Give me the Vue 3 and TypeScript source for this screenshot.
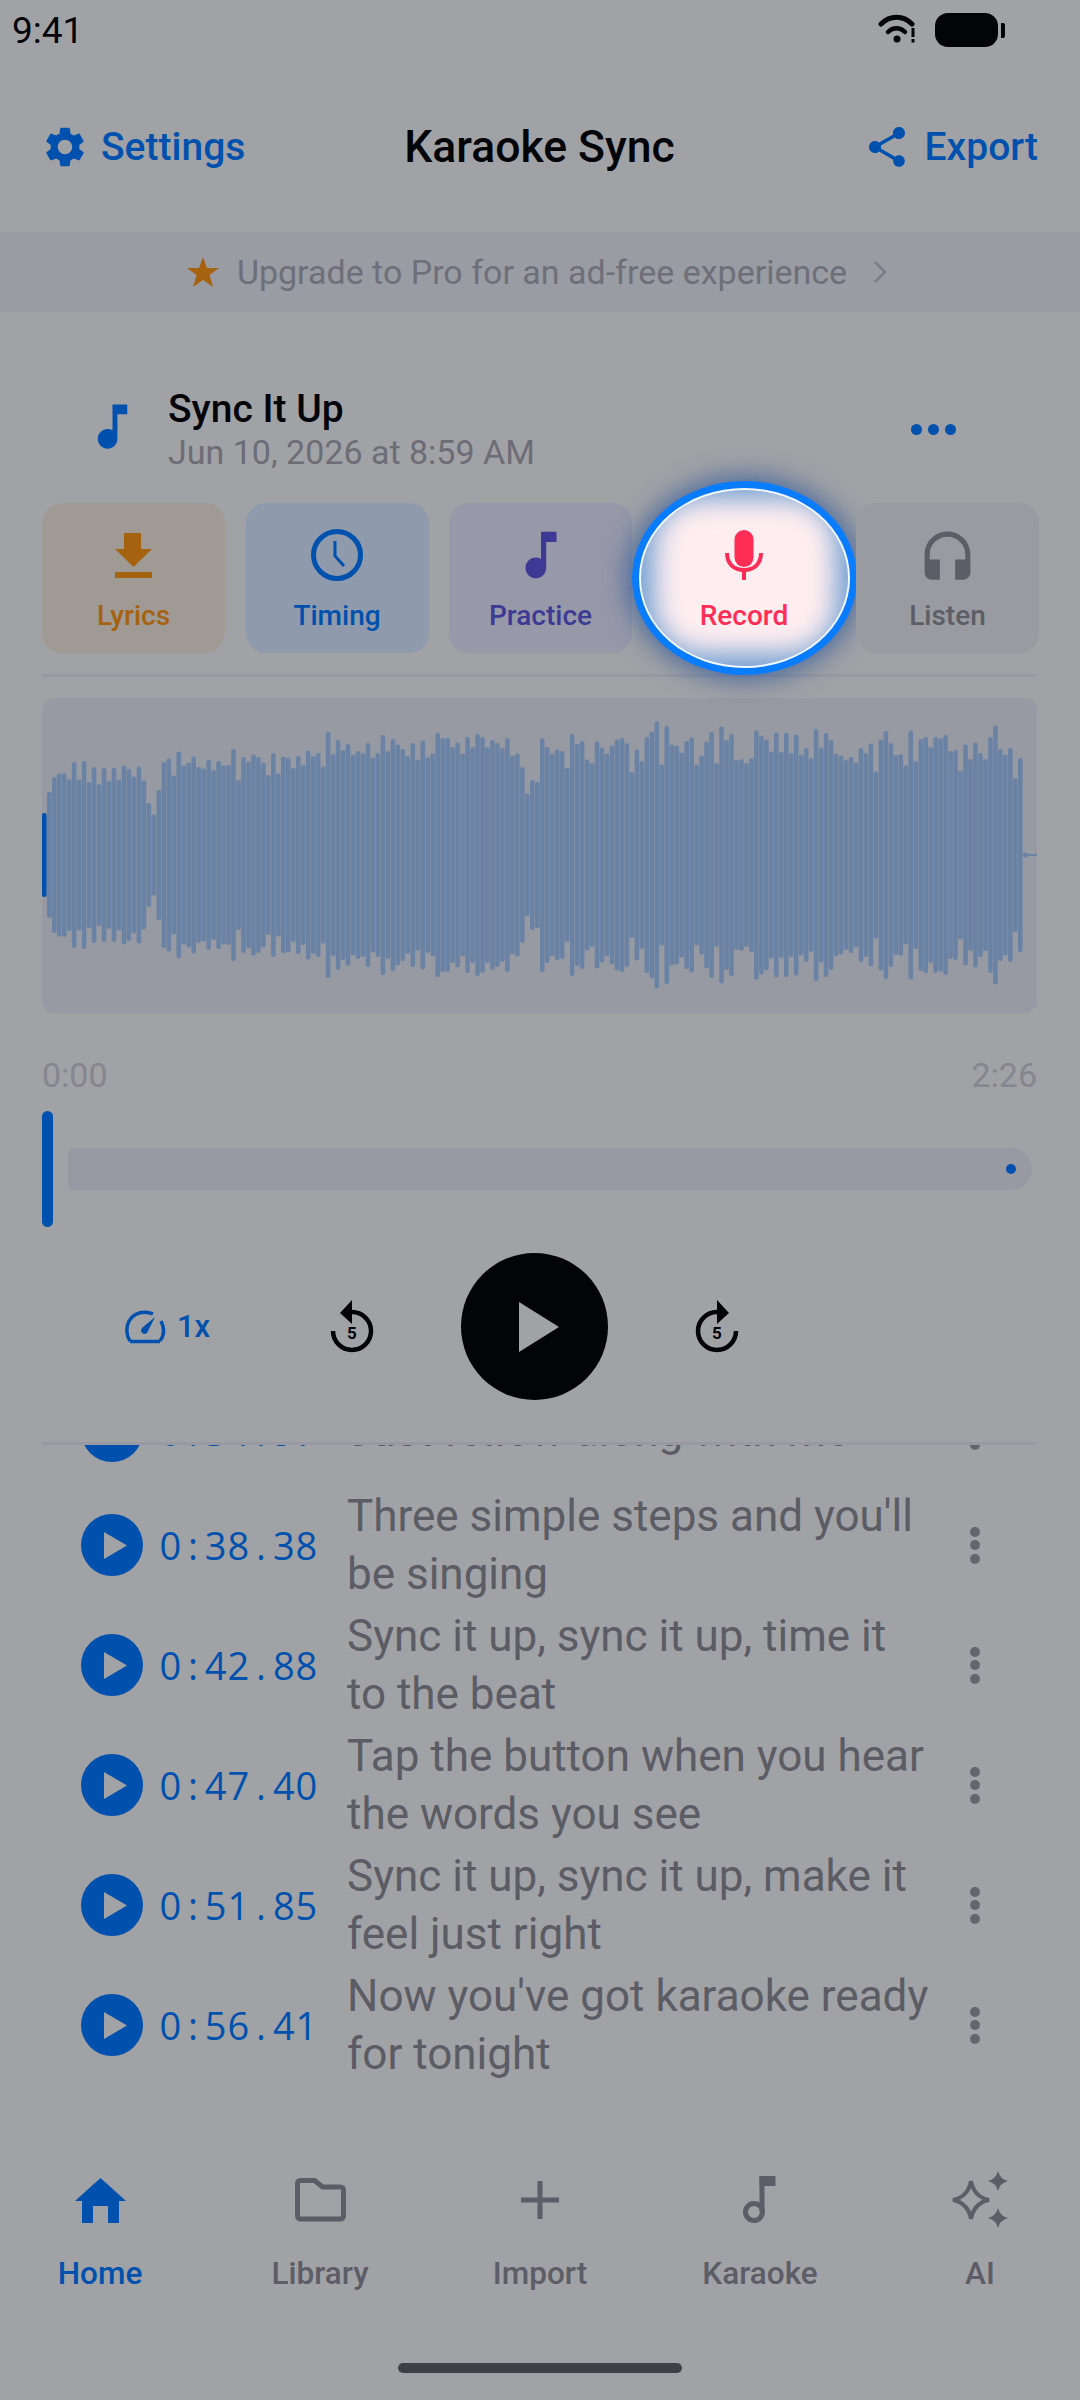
<template>
  <div class="page">
    <div class="status">
      <span class="clock">9:41</span>
      <div class="status-icons">
        <svg width="40" height="32" viewBox="0 0 40 32">
          <path d="M3 10C12 1 25 1 34 10" fill="none" stroke="#030408" stroke-width="5" stroke-linecap="round" />
          <path d="M10 18C15 13 22 13 27 18" fill="none" stroke="#030408" stroke-width="4.5" stroke-linecap="round" />
          <circle cx="19" cy="25" r="3.5" fill="#030408" />
          <rect x="33.5" y="14" width="3" height="9" fill="#030408" />
          <rect x="33.5" y="25" width="3" height="3.5" fill="#030408" />
        </svg>
        <div class="battery"></div>
        <div class="battery-cap"></div>
      </div>
    </div>

    <header class="header">
      <div class="head-btn settings">
        <svg width="48" height="48" viewBox="0 0 24 24" fill="#0051AD">
          <path d="M19.14 12.94c.04-.3.06-.61.06-.94 0-.32-.02-.64-.07-.94l2.03-1.58c.18-.14.23-.41.12-.61l-1.92-3.32c-.12-.22-.37-.29-.59-.22l-2.39.96c-.5-.38-1.03-.7-1.62-.94l-.36-2.54c-.04-.24-.24-.41-.48-.41h-3.84c-.24 0-.43.17-.47.41l-.36 2.54c-.59.24-1.13.57-1.62.94l-2.39-.96c-.22-.08-.47 0-.59.22L2.74 8.87c-.12.21-.08.47.12.61l2.03 1.58c-.05.3-.09.63-.09.94s.02.64.07.94l-2.03 1.58c-.18.14-.23.41-.12.61l1.92 3.32c.12.22.37.29.59.22l2.39-.96c.5.38 1.03.7 1.62.94l.36 2.54c.05.24.24.41.48.41h3.84c.24 0 .44-.17.47-.41l.36-2.54c.59-.24 1.13-.56 1.62-.94l2.39.96c.22.08.47 0 .59-.22l1.92-3.32c.12-.22.07-.47-.12-.61l-2.01-1.58zM12 15.6c-1.98 0-3.6-1.62-3.6-3.6s1.62-3.6 3.6-3.6 3.6 1.62 3.6 3.6-1.62 3.6-3.6 3.6z" />
        </svg>
        <span>Settings</span>
      </div>
      <h1 class="title">Karaoke Sync</h1>
      <div class="head-btn export">
        <svg width="48" height="48" viewBox="0 0 24 24" fill="#0051AD">
          <path d="M18 16.08c-.76 0-1.44.3-1.96.77L8.91 12.7c.05-.23.09-.46.09-.7s-.04-.47-.09-.7l7.05-4.11c.54.5 1.25.81 2.04.81 1.66 0 3-1.34 3-3s-1.34-3-3-3-3 1.34-3 3c0 .24.04.47.09.7L8.04 9.81C7.5 9.31 6.79 9 6 9c-1.66 0-3 1.34-3 3s1.34 3 3 3c.79 0 1.5-.31 2.04-.81l7.12 4.16c-.05.21-.08.43-.08.65 0 1.61 1.31 2.92 2.92 2.92 1.61 0 2.92-1.31 2.92-2.92s-1.31-2.92-2.92-2.92z" />
        </svg>
        <span>Export</span>
      </div>
    </header>

    <div class="banner">
      <svg width="32" height="30" viewBox="0 0 32 30">
        <polygon points="16,0 20,11 32,11 22.500,18 26,30 16,23 6,30 9.500,18 0,11 12,11" fill="#A5620F" />
      </svg>
      <span class="banner-text">Upgrade to Pro for an ad-free experience</span>
      <svg width="14" height="24" viewBox="0 0 14 24">
        <path d="M2 2l10 10L2 22" fill="none" stroke="#7A7B84" stroke-width="2.500" />
      </svg>
    </div>

    <section class="track">
      <svg class="track-note" width="59" height="59" viewBox="0 0 24 24" fill="#0051AD">
        <path d="M12 3v10.55c-.59-.34-1.27-.55-2-.55-2.21 0-4 1.79-4 4s1.790 4 4 4 4-1.790 4-4V7h4V3h-6z" />
      </svg>
      <div class="track-info">
        <div class="track-name">Sync It Up</div>
        <div class="track-date">Jun 10, 2026 at 8:59 AM</div>
      </div>
      <div class="more">
        <i></i><i></i><i></i>
      </div>
    </section>

    <nav class="tabs">
      <div class="tab lyrics">
        <div class="tab-icon">
          <svg width="37" height="45" viewBox="0 0 37 45" fill="#A5620F">
            <path d="M9 0h17v16h11L18.500 34 0 16h9zM0 39h37v6H0z" />
          </svg>
        </div>
        <span>Lyrics</span>
      </div>
      <div class="tab timing">
        <div class="tab-icon">
          <svg width="54" height="54" viewBox="0 0 54 54" fill="none" stroke="#0051AD">
            <circle cx="27" cy="27" r="23.500" stroke-width="5" />
            <path d="M25 13v15l9 10" stroke-width="3" />
          </svg>
        </div>
        <span>Timing</span>
      </div>
      <div class="tab practice">
        <div class="tab-icon">
          <svg width="62" height="62" viewBox="0 0 24 24" fill="#3C3A94">
            <path d="M12 3v10.55c-.59-.34-1.27-.55-2-.55-2.21 0-4 1.790-4 4s1.790 4 4 4 4-1.790 4-4V7h4V3h-6z" />
          </svg>
        </div>
        <span>Practice</span>
      </div>
      <div class="tab record">
        <div class="spot">
          <div class="spot-core"></div>
        </div>
        <div class="tab-icon">
          <svg width="38" height="50" viewBox="0 0 38 50">
            <rect x="9.500" y="0" width="19" height="37" rx="9.500" fill="#FF2D55" />
            <path d="M2 23c0 11 7 17 17 17s17-6 17-17" fill="none" stroke="#FF2D55" stroke-width="4" />
            <rect x="17" y="38" width="4" height="12" fill="#FF2D55" />
          </svg>
        </div>
        <span>Record</span>
      </div>
      <div class="tab listen">
        <div class="tab-icon">
          <svg class="headset" width="61" height="61" viewBox="0 0 24 24" fill="#5C5D66">
            <path d="M12 1c-4.970 0-9 4.030-9 9v7c0 1.660 1.340 3 3 3h3v-8H5v-2c0-3.870 3.130-7 7-7s7 3.130 7 7v2h-4v8h3c1.660 0 3-1.340 3-3v-7c0-4.970-4.030-9-9-9z" />
          </svg>
        </div>
        <span>Listen</span>
      </div>
    </nav>

    <div class="divider top-div"></div>

    <div class="wave">
      <svg width="995" height="315" viewBox="0 0 995 315">
        <rect
          v-for="bar in bars"
          :key="bar.x"
          :x="bar.x"
          :y="157 - bar.h / 2"
          width="4.600"
          :height="bar.h"
          rx="2"
          :fill="bar.x === 0 ? '#0051AD' : '#6A83A5'"
        />
        <circle cx="983.500" cy="157" r="2.500" fill="#6A83A5" />
        <rect x="983" y="156" width="13" height="2" fill="#6A83A5" />
      </svg>
    </div>

    <div class="times">
      <span>0:00</span>
      <span>2:26</span>
    </div>

    <div class="scrub">
      <div class="scrub-handle"></div>
      <div class="scrub-track">
        <div class="scrub-dot"></div>
      </div>
    </div>

    <div class="controls">
      <div class="speed">
        <svg width="42" height="34" viewBox="0 0 42 34" fill="none" stroke="#0051AD">
          <path d="M6 31C2 25 1.800 17 5 11C9 4 16 2.200 21 2.200C24 2.200 27 3 29 4" stroke-width="3.500" />
          <path d="M37 11C40.500 18 40.500 25 36 31" stroke-width="3.500" />
          <path d="M6 31.500H36" stroke-width="3.500" />
          <path d="M31 7L24 21a3.500 3.500 0 1 1-6-3z" fill="#0051AD" stroke="none" />
        </svg>
        <span>1x</span>
      </div>
      <svg class="skip" width="48" height="56" viewBox="0 0 48 56">
        <path d="M23 13A19 19 0 1 1 4 32" fill="none" stroke="#030408" stroke-width="4.500" />
        <polygon points="11,14 23,1 23,25" fill="#030408" />
        <text x="23" y="40" text-anchor="middle" class="skip-num">5</text>
      </svg>
      <div class="play">
        <svg width="40" height="50" viewBox="0 0 40 50">
          <polygon points="0,0 40,25 0,50" fill="#A1A2A6" />
        </svg>
      </div>
      <svg class="skip" width="48" height="56" viewBox="0 0 48 56">
        <path d="M25 13A19 19 0 1 0 44 32" fill="none" stroke="#030408" stroke-width="4.500" />
        <polygon points="37,14 25,1 25,25" fill="#030408" />
        <text x="25" y="40" text-anchor="middle" class="skip-num">5</text>
      </svg>
    </div>

    <div class="divider list-div"></div>

    <div class="list">
      <div class="list-inner">
        <div v-for="row in rows" :key="row.time" class="row">
          <div class="row-play">
            <svg width="23" height="27" viewBox="0 0 23 27">
              <polygon points="0,0 23,13.500 0,27" fill="#A1A2A6" />
            </svg>
          </div>
          <div class="row-time">
            <span v-for="(ch, i) in row.time" :key="i">{{ ch }}</span>
          </div>
          <div class="row-text">{{ row.text }}</div>
          <div class="kebab">
            <i></i><i></i><i></i>
          </div>
        </div>
      </div>
    </div>

    <footer class="nav">
      <div class="nav-item active">
        <div class="nav-icon">
          <svg width="51" height="45" viewBox="0 0 51 45" fill="#0051AD">
            <path d="M25.500 0L51 23h-7v22H33V28H18v17H7V23H0z" />
          </svg>
        </div>
        <span>Home</span>
      </div>
      <div class="nav-item">
        <div class="nav-icon">
          <svg width="51" height="44" viewBox="0 0 51 44" fill="none" stroke="#5C5D66" stroke-width="5">
            <path d="M2.500 5.500a3 3 0 0 1 3-3h14l8 6.500h18a3 3 0 0 1 3 3v26a3 3 0 0 1-3 3h-40a3 3 0 0 1-3-3z" />
          </svg>
        </div>
        <span>Library</span>
      </div>
      <div class="nav-item">
        <div class="nav-icon">
          <svg width="38" height="38" viewBox="0 0 38 38" fill="#5C5D66">
            <path d="M16.500 0h5v16.500H38v5H21.500V38h-5V21.500H0v-5h16.500z" />
          </svg>
        </div>
        <span>Import</span>
      </div>
      <div class="nav-item">
        <div class="nav-icon">
          <svg width="34" height="48" viewBox="0 0 34 48">
            <circle cx="11" cy="36" r="8.500" fill="none" stroke="#5C5D66" stroke-width="5" />
            <rect x="16.500" y="0" width="5" height="36" fill="#5C5D66" />
            <rect x="16.500" y="0" width="16" height="10" fill="#5C5D66" />
          </svg>
        </div>
        <span>Karaoke</span>
      </div>
      <div class="nav-item">
        <div class="nav-icon">
          <svg width="60" height="58" viewBox="0 0 60 58">
            <path d="M21 10Q24 26 39 29Q24 32 21 48Q18 32 3 29Q18 26 21 10z" fill="none" stroke="#5C5D66" stroke-width="4" />
            <path d="M48 0Q50 8 58 10Q50 12 48 20Q46 12 38 10Q46 8 48 0z" fill="#5C5D66" />
            <path d="M48 37Q50 45 58 47Q50 49 48 57Q46 49 38 47Q46 45 48 37z" fill="#5C5D66" />
          </svg>
        </div>
        <span>AI</span>
      </div>
    </footer>

    <div class="home-bar-wrap">
      <div class="home-bar"></div>
    </div>
  </div>
</template>

<script setup lang="ts">
import { computed } from 'vue'

interface Row {
  time: string
  text: string
}

const rows: Row[] = [
  { time: '0:34.97', text: 'Just follow along with me' },
  { time: '0:38.38', text: "Three simple steps and you'll be singing" },
  { time: '0:42.88', text: 'Sync it up, sync it up, time it to the beat' },
  { time: '0:47.40', text: 'Tap the button when you hear the words you see' },
  { time: '0:51.85', text: 'Sync it up, sync it up, make it feel just right' },
  { time: '0:56.41', text: "Now you've got karaoke ready for tonight" }
]

// bar heights read off the waveform, left to right
const heights = [
  84, 126, 156, 163, 164, 152, 186, 151, 188, 146, 176, 142, 174, 148, 174, 151, 179, 172, 157, 177,
  149, 104, 81, 130, 186, 193, 159, 207, 179, 185, 197, 176, 173, 190, 170, 188, 179, 180, 212, 150,
  196, 187, 201, 196, 185, 160, 204, 163, 197, 195, 174, 198, 180, 209, 198, 204, 177, 246, 202, 230,
  210, 222, 201, 208, 204, 224, 195, 204, 240, 208, 232, 221, 212, 198, 224, 191, 229, 196, 203, 244,
  234, 234, 216, 225, 203, 236, 216, 242, 236, 216, 230, 224, 214, 234, 199, 203, 176, 123, 150, 146,
  234, 216, 203, 211, 208, 174, 242, 222, 228, 191, 184, 227, 215, 203, 219, 231, 234, 224, 166, 211,
  188, 236, 247, 267, 181, 258, 221, 219, 205, 228, 235, 181, 199, 227, 246, 184, 257, 230, 242, 190,
  192, 184, 194, 249, 239, 231, 207, 245, 206, 244, 204, 241, 201, 214, 194, 252, 215, 244, 230, 203,
  199, 190, 196, 185, 214, 204, 223, 167, 231, 248, 224, 200, 202, 179, 249, 188, 232, 236, 216, 236,
  233, 240, 208, 210, 169, 221, 192, 225, 204, 192, 236, 259, 212, 201, 214, 154, 194
]

const bars = computed(() => {
  const step = 976 / (heights.length - 1)
  return heights.map((h, i) => ({ x: i * step, h }))
})
</script>

<style>
html,
body {
  margin: 0;
  background: #a1a2a6;
}
</style>

<style scoped>
.page {
  width: 1080px;
  height: 2400px;
  overflow: hidden;
  background: #a1a2a6;
  font-family: Roboto, sans-serif;
  display: flex;
  flex-direction: column;
}

.status {
  height: 60px;
  box-sizing: border-box;
  padding: 0 75px 0 12px;
  display: flex;
  justify-content: space-between;
  align-items: center;
}

.clock {
  font-size: 37px;
  color: #030408;
}

.status-icons {
  display: flex;
  align-items: center;
}

.battery {
  width: 63px;
  height: 34px;
  border-radius: 13px;
  background: #030408;
  margin-left: 17px;
}

.battery-cap {
  width: 4px;
  height: 15px;
  margin-left: 3px;
  background: #030408;
  border-radius: 0 2px 2px 0;
}

.header {
  height: 172px;
  box-sizing: border-box;
  padding: 2px 42px 0 41px;
  display: grid;
  grid-template-columns: 1fr auto 1fr;
  align-items: center;
}

.head-btn {
  display: flex;
  align-items: center;
  color: #0051ad;
  font-size: 39px;
  font-weight: 500;
}

.settings {
  gap: 12px;
}

.export {
  gap: 14px;
  justify-content: flex-end;
}

.title {
  margin: 0;
  font-size: 44.500px;
  font-weight: 500;
  color: #030408;
}

.banner {
  height: 80px;
  box-sizing: border-box;
  padding-right: 6px;
  background: #9a9ca4;
  display: flex;
  align-items: center;
  justify-content: center;
  gap: 18px;
}

.banner-text {
  font-size: 34px;
  color: #6e6f78;
  margin-right: 8px;
}

.track {
  height: 191px;
  box-sizing: border-box;
  padding: 75px 0 0 83px;
  display: flex;
  align-items: flex-start;
}

.track-note {
  margin-top: 10px;
}

.track-info {
  margin-left: 26px;
  flex: 1;
}

.track-name {
  font-size: 39px;
  font-weight: 500;
  color: #030408;
  line-height: 44px;
}

.track-date {
  font-size: 34px;
  color: #6c6d75;
  line-height: 42px;
}

.more {
  display: flex;
  gap: 6px;
  margin: 37px 124px 0 0;
}

.more i {
  width: 11px;
  height: 11px;
  border-radius: 50%;
  background: #0051ad;
}

.tabs {
  height: 150px;
  padding-left: 42px;
  display: flex;
  gap: 20.500px;
}

.tab {
  width: 183px;
  height: 150px;
  box-sizing: border-box;
  border-radius: 20px;
  position: relative;
  display: flex;
  flex-direction: column;
  align-items: center;
  font-size: 28px;
  font-weight: 500;
}

.tab span {
  position: relative;
  margin-top: 3px;
}

.tab-icon {
  position: relative;
  height: 54px;
  margin-top: 25px;
  margin-bottom: 14px;
  display: flex;
  align-items: center;
  justify-content: center;
}

.headset {
  margin-top: 8px;
}

.lyrics {
  background: #a09a95;
  color: #a5620f;
}

.timing {
  background: #8f9bad;
  color: #0051ad;
}

.practice {
  background: #9799a8;
  color: #3c3a94;
}

.record {
  color: #ff2d55;
}

.listen {
  background: #9a9ba0;
  color: #5c5d66;
}

.spot {
  position: absolute;
  left: -14px;
  top: -15px;
  width: 211px;
  height: 180px;
  box-sizing: border-box;
  border-radius: 50%;
  overflow: hidden;
  border: 2px solid #f4f8ff;
  background: #6a9bd0;
  box-shadow: 0 0 0 7px #0a7cff, 0 0 26px 12px rgba(0, 60, 150, 0.55);
}

.spot-core {
  position: absolute;
  left: 12px;
  top: 8px;
  width: 184px;
  height: 156px;
  border-radius: 50px;
  background: #ffeef0;
  filter: blur(14px);
}

.divider {
  height: 3px;
  margin: 0 43px 0 42px;
  background: #9999a4;
}

.top-div {
  margin-top: 21px;
}

.wave {
  width: 995px;
  height: 315px;
  margin: 21px 0 0 42px;
  border-radius: 12px;
  background: #989aa3;
  overflow: hidden;
}

.wave svg {
  display: block;
}

.times {
  margin: 40px 43px 0 42px;
  height: 44px;
  display: flex;
  justify-content: space-between;
  align-items: center;
  font-size: 34px;
  color: #85868e;
}

.scrub {
  height: 116px;
  margin: 14px 43px 0 42px;
  display: flex;
  align-items: center;
}

.scrub-handle {
  width: 11px;
  height: 116px;
  border-radius: 6px;
  background: #0051ad;
}

.scrub-track {
  flex: 1;
  height: 42px;
  margin: 0 5px 0 15px;
  border-radius: 4px 21px 21px 4px;
  background: #989aa3;
  display: flex;
  align-items: center;
  justify-content: flex-end;
}

.scrub-dot {
  width: 10px;
  height: 10px;
  border-radius: 50%;
  margin-right: 16px;
  background: #0051ad;
}

.controls {
  height: 147px;
  margin-top: 26px;
  padding-left: 124px;
  display: grid;
  grid-template-columns: 205px 132px 231px auto;
  align-items: center;
}

.speed {
  display: flex;
  align-items: center;
  gap: 11px;
  color: #0051ad;
  font-size: 31px;
  font-weight: 500;
}

.skip {
  display: block;
}

.skip-num {
  font-family: Roboto, sans-serif;
  font-size: 17px;
  font-weight: 700;
  fill: #030408;
}

.play {
  width: 147px;
  height: 147px;
  border-radius: 50%;
  background: #030408;
  display: flex;
  align-items: center;
  justify-content: center;
  padding-left: 9px;
  box-sizing: border-box;
}

.list-div {
  margin-top: 42px;
}

.list {
  height: 726px;
  overflow: hidden;
}

.list-inner {
  margin-top: -68px;
}

.row {
  min-height: 108px;
  box-sizing: border-box;
  padding: 2px 0 2px 81px;
  display: flex;
  align-items: center;
}

.row-play {
  width: 62px;
  height: 62px;
  flex: none;
  border-radius: 50%;
  background: #0051ad;
  display: flex;
  align-items: center;
  justify-content: center;
  padding-left: 7px;
  box-sizing: border-box;
}

.row-time {
  width: 160px;
  margin-left: 16px;
  display: flex;
  color: #0051ad;
  font-family: "Open Sans", sans-serif;
  font-size: 38px;
}

.row-time span {
  width: 22.700px;
  text-align: center;
}

.row-text {
  width: 585px;
  margin-left: 28px;
  font-size: 44px;
  line-height: 58px;
  color: #5b5c64;
}

.kebab {
  margin-left: 38px;
  display: flex;
  flex-direction: column;
  gap: 3.500px;
}

.kebab i {
  width: 10px;
  height: 10px;
  border-radius: 50%;
  background: #64656d;
}

.nav {
  height: 138px;
  display: flex;
  gap: 20px;
}

.nav-item {
  width: 200px;
  display: flex;
  flex-direction: column;
  align-items: center;
  color: #5c5d66;
  font-size: 31.500px;
  font-weight: 500;
}

.nav-item.active {
  color: #0051ad;
}

.nav-icon {
  height: 58px;
  margin-bottom: 26px;
  display: flex;
  align-items: center;
  justify-content: center;
}

.home-bar-wrap {
  flex: 1;
  display: flex;
  justify-content: center;
  padding-top: 54px;
}

.home-bar {
  width: 284px;
  height: 10px;
  border-radius: 5px;
  background: #3f4045;
}
</style>
